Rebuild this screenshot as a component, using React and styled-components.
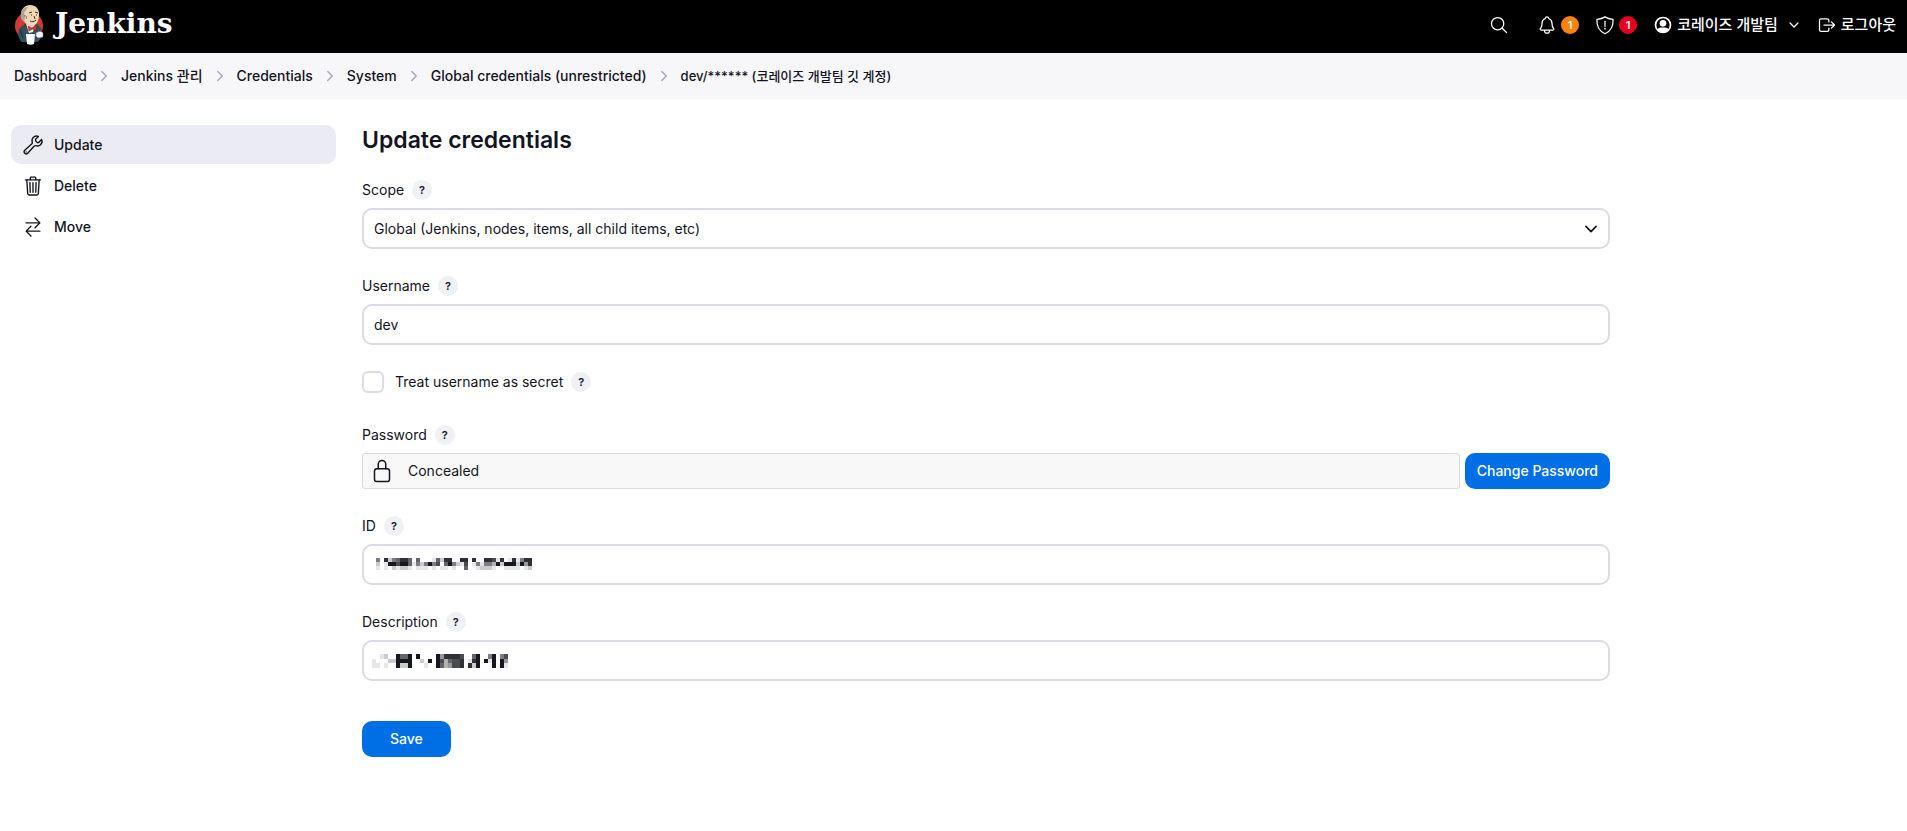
import React from 'react';
import styled, { createGlobalStyle } from 'styled-components';
import {
  IoSearchOutline,
  IoNotificationsOutline,
  IoChevronDown,
  IoChevronForward,
  IoLogOutOutline,
  IoTrashOutline,
  IoBuildOutline,
  IoSwapHorizontal,
  IoLockClosedOutline,
} from 'react-icons/io5';

const CRUMBS = [
  { label: 'Dashboard' },
  { label: 'Jenkins 관리' },
  { label: 'Credentials' },
  { label: 'System' },
  { label: 'Global credentials (unrestricted)' },
  { label: 'dev/****** (코레이즈 개발팀 깃 계정)', small: true },
];

const TASKS = [
  { label: 'Update', icon: <IoBuildOutline />, active: true },
  { label: 'Delete', icon: <IoTrashOutline /> },
  { label: 'Move', icon: <IoSwapHorizontal /> },
];

// One digit per cell, 0 is blank and 9 is the darkest
const ID_MASK = [
  '508256886060001628800880800887180181588',
  '201997996152595706952170151553929992948',
  '101021221011101011010060012221001111012',
];

const DESCRIPTION_MASK = [
  '0012009669090000948888700690059057',
  '1000229999002090973677801890919094',
  '1101009229000100963477808290009091',
];

const Butler = () => (
  <svg width="30" height="41" viewBox="0 0 30 41" aria-hidden="true">
    <ellipse cx="15" cy="22" rx="14" ry="14" fill="#d33833" />
    <path d="M6 24l5-4 6 3 6-3 4 4 1 9-4 5H8c-4-3-5-9-2-14z" fill="#335061" />
    <path d="M6 25l3 9M11 20l5 9 5-9" fill="none" stroke="#1c2f3c" strokeWidth="1" />
    <path d="M12 20l3 9 4-1 2-8-4 2z" fill="#fff" />
    <path d="M7 10c0-5 4-9 9-9 6 0 9 4 9 9 0 7-2 11-7 12-5 0-9-4-11-12z" fill="#f0d6b7" />
    <path d="M7 10c-1 3 0 6 3 8l1-5-1-4 4-6c-4 0-7 3-7 7z" fill="#a8a49f" />
    <path d="M10 12c2-1 3 1 2 3" fill="none" stroke="#8b6b4c" strokeWidth="1" />
    <path
      d="M15 9l3-1M21 8l3 1M17 11h1M22 11h1M20 12l1 3M16 17c2 1 4 1 6-1"
      fill="none"
      stroke="#49341f"
      strokeWidth="1"
    />
    <path d="M14 22l4 2 4-3 1 6-4-2-4 2z" fill="#d33833" stroke="#81110c" strokeWidth=".5" />
    <path d="M12 30h9l-1 10c-2 1-5 1-7 0z" fill="#fff" />
    <path d="M22 29c2-2 6-2 7 0v4l-5 1-2-2z" fill="#f7f3ef" stroke="#777" strokeWidth=".5" />
  </svg>
);

const ShieldIcon = () => (
  <svg viewBox="0 0 512 512" fill="none" stroke="currentColor" strokeWidth="32" strokeLinecap="round" strokeLinejoin="round">
    <path d="M463 112c-90-8-150-25-207-64-57 39-117 56-207 64-8 150 28 289 207 368 179-79 215-218 207-368z" />
    <path d="M256 160v128" />
    <circle cx="256" cy="350" r="8" fill="currentColor" />
  </svg>
);

const UserIcon = () => (
  <svg viewBox="-2 -2 24 24">
    <circle cx="10" cy="10" r="9" fill="none" stroke="currentColor" strokeWidth="2" />
    <circle cx="10" cy="8" r="4" fill="currentColor" />
    <path d="M3 15c2-2 4-2 7-2s5 0 7 2c-2 3-4 4-7 4s-5-1-7-4z" fill="currentColor" />
  </svg>
);

const Mosaic = ({ rows, tall }) => (
  <svg
    width={rows[0].length * 4}
    height={tall ? 14 : 12}
    viewBox={`0 0 ${rows[0].length * 4} ${rows.length * 4}`}
    preserveAspectRatio="none"
    shapeRendering="crispEdges"
    aria-hidden="true"
  >
    {rows.map((row, y) =>
      [...row].map((level, x) =>
        level === '0' ? null : (
          <rect key={`${x}-${y}`} x={x * 4} y={y * 4} width="4" height="4" fill="#17171f" opacity={level / 9} />
        )
      )
    )}
  </svg>
);

const Label = ({ htmlFor, children }) => (
  <LabelRow>
    <label htmlFor={htmlFor}>{children}</label>
    <Help type="button" aria-label={`Help for ${children}`}>?</Help>
  </LabelRow>
);

const App = () => {
  return (
    <>
      <GlobalStyle />
      <Header>
        <Brand href="#">
          <Butler />
          <BrandName>Jenkins</BrandName>
        </Brand>
        <HeaderActions>
          <HeaderButton type="button" aria-label="Search"><IoSearchOutline /></HeaderButton>
          <Alerts>
            <HeaderButton type="button">
              <IoNotificationsOutline />
              <Badge $color="#ff820a">1</Badge>
            </HeaderButton>
            <HeaderButton type="button">
              <ShieldIcon />
              <Badge $color="#e6001f">1</Badge>
            </HeaderButton>
          </Alerts>
          <Account>
            <HeaderLink href="#"><UserIcon />코레이즈 개발팀</HeaderLink>
            <SmallChevron />
          </Account>
          <HeaderLink href="#"><IoLogOutOutline />로그아웃</HeaderLink>
        </HeaderActions>
      </Header>

      <Breadcrumbs>
        {CRUMBS.map((crumb, i) => (
          <React.Fragment key={crumb.label}>
            {i > 0 && <IoChevronForward />}
            <Crumb href="#" $small={crumb.small}>{crumb.label}</Crumb>
          </React.Fragment>
        ))}
      </Breadcrumbs>

      <Page>
        <Tasks>
          {TASKS.map((task) => (
            <Task key={task.label} href="#" $active={task.active}>
              {task.icon}
              {task.label}
            </Task>
          ))}
        </Tasks>

        <Main>
          <Title>Update credentials</Title>
          <Form onSubmit={(e) => e.preventDefault()}>
            <Field>
              <Label htmlFor="scope">Scope</Label>
              <SelectWrap>
                <Select id="scope">
                  <option>Global (Jenkins, nodes, items, all child items, etc)</option>
                </Select>
                <IoChevronDown />
              </SelectWrap>
            </Field>
            <Field>
              <Label htmlFor="username">Username</Label>
              <Input id="username" defaultValue="dev" />
            </Field>
            <CheckRow>
              <Checkbox type="checkbox" id="secret" />
              <Label htmlFor="secret">Treat username as secret</Label>
            </CheckRow>
            <Field>
              <Label htmlFor="change-password">Password</Label>
              <PasswordRow>
                <Concealed><IoLockClosedOutline />Concealed</Concealed>
                <Button type="button" id="change-password">Change Password</Button>
              </PasswordRow>
            </Field>
            <Field>
              <Label htmlFor="id">ID</Label>
              <MaskedWrap>
                <Input id="id" />
                <Mask $left={14}><Mosaic rows={ID_MASK} /></Mask>
              </MaskedWrap>
            </Field>
            <Field>
              <Label htmlFor="description">Description</Label>
              <MaskedWrap>
                <Input id="description" />
                <Mask $left={10}><Mosaic rows={DESCRIPTION_MASK} tall /></Mask>
              </MaskedWrap>
            </Field>
            <Button $wide>Save</Button>
          </Form>
        </Main>
      </Page>
    </>
  );
};

const GlobalStyle = createGlobalStyle`
  * {
    box-sizing: border-box;
  }

  body {
    margin: 0;
    background: #fff;
    color: #14141f;
    font: 400 14px/20px Inter, 'Noto Sans CJK KR', sans-serif;
  }

  button, input, select {
    font: inherit;
    color: inherit;
  }

  a {
    color: inherit;
    text-decoration: none;
  }
`;

const Header = styled.header`
  display: flex;
  align-items: center;
  justify-content: space-between;
  height: 53px;
  padding: 0 11px 4px 14px;
  background: #000;
  color: #fff;
`;

const Brand = styled.a`
  display: flex;
  align-items: center;
  gap: 11px;
`;

const BrandName = styled.span`
  padding-bottom: 2px;
  font: 700 28px/38px 'DejaVu Serif', 'Liberation Serif', serif;
`;

const HeaderActions = styled.div`
  display: flex;
  align-items: center;
  gap: 16px;
  font-weight: 500;

  svg {
    width: 20px;
    height: 20px;
  }
`;

const HeaderButton = styled.button`
  display: flex;
  align-items: center;
  gap: 4px;
  padding: 0;
  border: none;
  background: none;
  cursor: pointer;
`;

const Alerts = styled.div`
  display: flex;
  gap: 16px;
  margin-left: 12px;
`;

const Badge = styled.span`
  width: 18px;
  height: 18px;
  border-radius: 50%;
  background: ${({ $color }) => $color};
  font-size: 11px;
  font-weight: 600;
  line-height: 18px;
  text-align: center;
`;

const Account = styled.div`
  display: flex;
  align-items: center;
  gap: 9px;
`;

const HeaderLink = styled.a`
  display: flex;
  align-items: center;
  gap: 4px;
  font-size: 15px;
`;

const SmallChevron = styled(IoChevronDown)`
  && {
    width: 14px;
    height: 14px;
  }
`;

const Breadcrumbs = styled.nav`
  display: flex;
  align-items: center;
  gap: 9px;
  height: 46px;
  padding: 0 14px;
  background: #f7f7fa;
  font-weight: 500;

  svg {
    flex: none;
    width: 16px;
    height: 16px;
    color: #a3a9be;
  }
`;

const Crumb = styled.a`
  font-size: ${({ $small }) => ($small ? '13px' : '14px')};
  white-space: nowrap;
`;

const Page = styled.div`
  display: grid;
  grid-template-columns: 325px minmax(0, 1248px);
  gap: 26px;
  padding: 26px 11px;
`;

const Tasks = styled.nav`
  display: flex;
  flex-direction: column;
  gap: 2px;
`;

const Task = styled.a`
  display: flex;
  align-items: center;
  gap: 10px;
  height: 39px;
  padding: 0 11px;
  border-radius: 10px;
  background: ${({ $active }) => ($active ? '#ebebf4' : 'none')};
  font-weight: 500;

  svg {
    width: 22px;
    height: 22px;
  }
`;

const Main = styled.main`
  min-width: 0;
`;

const Title = styled.h1`
  margin: 0 0 24px;
  font-size: 23px;
  font-weight: 600;
  line-height: 31px;
`;

const Form = styled.form`
  display: flex;
  flex-direction: column;
  align-items: flex-start;
  gap: 27px;
`;

const Field = styled.div`
  width: 100%;
`;

const LabelRow = styled.div`
  display: flex;
  align-items: center;
  gap: 8px;
  height: 20px;
`;

const Help = styled.button`
  width: 20px;
  height: 20px;
  padding: 0;
  border: none;
  border-radius: 50%;
  background: #eff1f4;
  font-size: 11px;
  font-weight: 600;
  cursor: pointer;
`;

const Input = styled.input`
  display: block;
  width: 100%;
  height: 41px;
  margin-top: 8px;
  padding: 0 10px;
  border: 2px solid #dcdce6;
  border-radius: 10px;
  background: #fff;
`;

const SelectWrap = styled.div`
  position: relative;

  svg {
    position: absolute;
    top: 12px;
    right: 10px;
    width: 18px;
    height: 18px;
    pointer-events: none;
  }
`;

const Select = styled(Input).attrs({ as: 'select' })`
  appearance: none;
`;

const CheckRow = styled.div`
  display: flex;
  align-items: center;
  gap: 11px;
  height: 20px;
  margin-bottom: 6px;
`;

const Checkbox = styled.input`
  appearance: none;
  width: 22px;
  height: 22px;
  margin: 0;
  border: 2px solid #dcdce6;
  border-radius: 6px;
`;

const PasswordRow = styled.div`
  display: flex;
  gap: 5px;
  margin-top: 8px;
`;

const Concealed = styled.div`
  display: flex;
  flex: 1;
  align-items: center;
  gap: 14px;
  padding: 0 7px;
  border: 1px solid #d8dbdf;
  border-radius: 3px;
  background: #f8f8f8;

  svg {
    width: 24px;
    height: 24px;
  }
`;

const Button = styled.button`
  height: 36px;
  margin-top: ${({ $wide }) => ($wide ? '13px' : 0)};
  padding: 0 ${({ $wide }) => ($wide ? '28px' : '12px')};
  border: none;
  border-radius: 10px;
  background: #006fe6;
  color: #fff;
  font-weight: 500;
  cursor: pointer;
`;

const MaskedWrap = styled.div`
  position: relative;
`;

const Mask = styled.span`
  position: absolute;
  top: 14px;
  left: ${({ $left }) => $left}px;
  line-height: 0;
`;

export default App;
